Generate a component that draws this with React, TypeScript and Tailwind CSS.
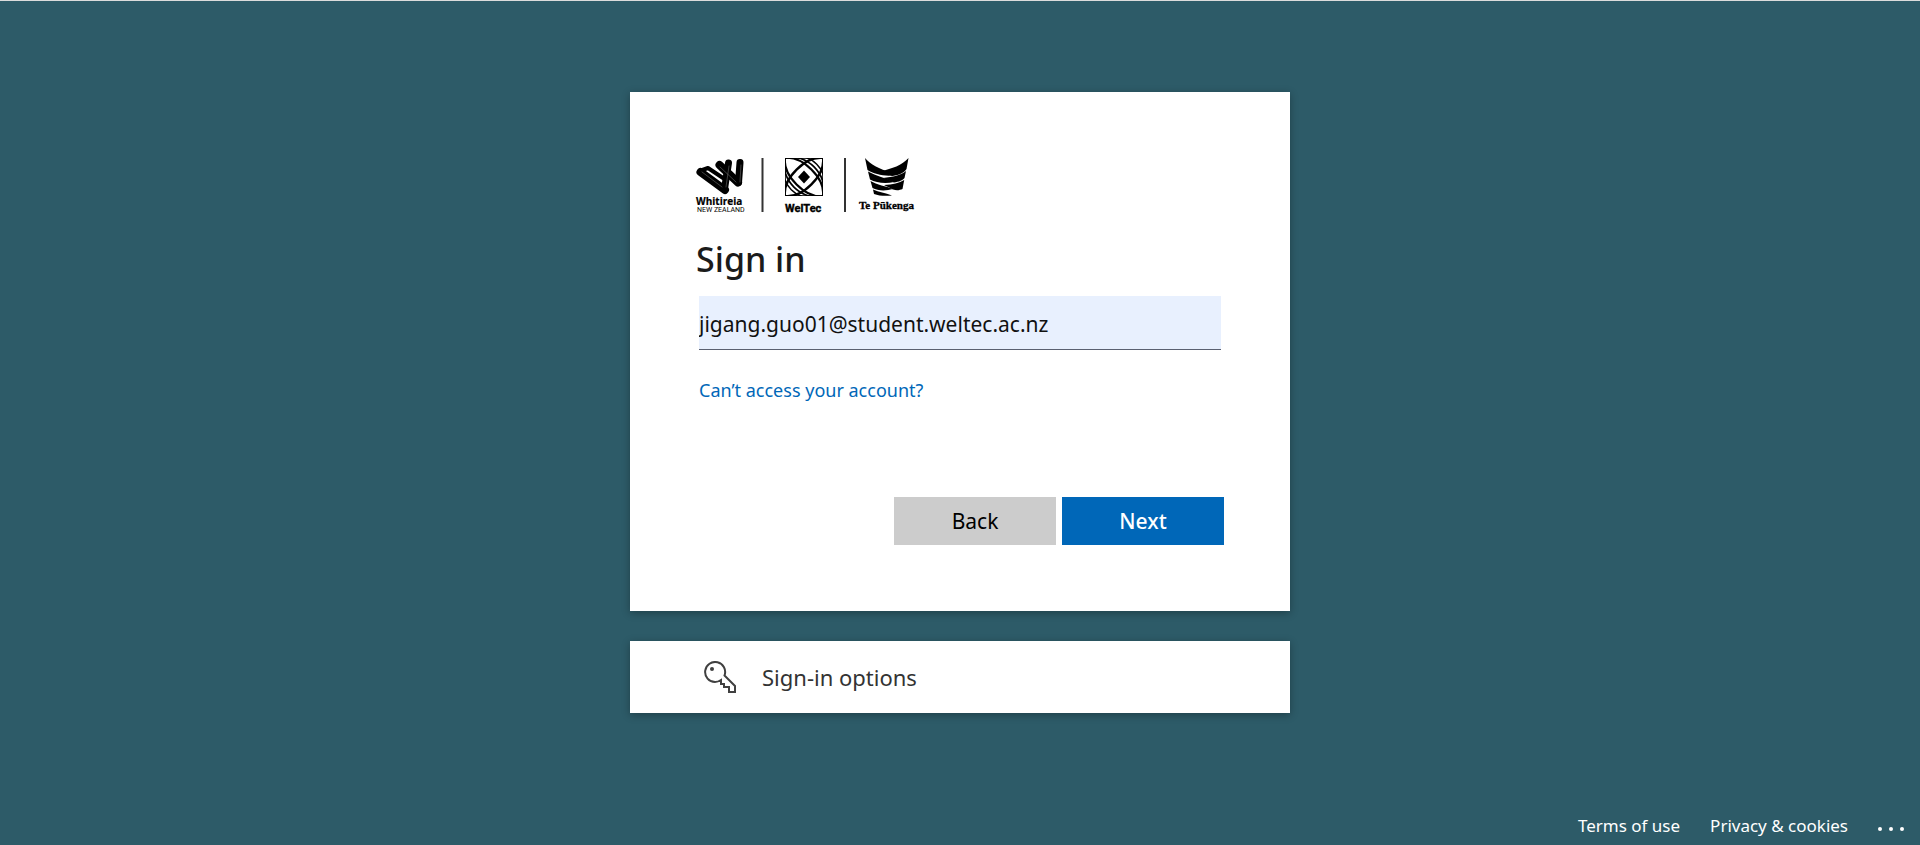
import { useState } from "react";

function PartnerLogo() {
  return (
    <svg viewBox="0 0 220 58" className="h-[58px] w-[220px] overflow-visible" role="img" aria-label="Whitireia, WelTec and Te Pūkenga">
      <g strokeLinejoin="round" strokeLinecap="round">
        <path d="M4.500 14 29 32M23.500 7 42 24.500" stroke="#000" strokeWidth="8" />
        <path d="M28.500 31 32.500 5M42.500 24.500 44 4.500" stroke="#000" strokeWidth="7" />
        <path d="M3.500 13 12 10 27 20" stroke="#000" strokeWidth="4" fill="none" />
        <g stroke="#fff" fill="none" strokeWidth="0.500" opacity="0.5">
          <path d="M6 14 26 29" />
          <path d="M24 9 40 24" />
          <path d="M30 29 33 8" />
          <path d="M44 24 45 7" />
        </g>
        <path d="M37 6 39.500 4 40 12 36.500 9Z" fill="#fff" />
      </g>
      <text x="0" y="47" fontFamily="'Open Sans', sans-serif" fontWeight="700" fontSize="10" stroke="#000" strokeWidth="0.2">Whitireia</text>
      <text x="1" y="54" fontFamily="Roboto, sans-serif" fontSize="7">NEW ZEALAND</text>

      <path d="M66.500 0V54M149 0V54" stroke="#333" strokeWidth="2" />

      <svg x="89" y="0" width="38" height="38" viewBox="0 0 38 38" fill="none" stroke="#000">
        <path d="M.5.500H37.500V37.500H.5Z" strokeWidth="0.8" />
        <path d="M19 12.500 25 19 19 25.500 13 19Z" fill="#000" stroke="none" />
        <g transform="rotate(45 19 19)">
          <path d="M-8 19C3 5 35 5 46 19C35 33 3 33-8 19Z" strokeWidth="2.200" />
          <path d="M-8 19C3 0 35 0 46 19C35 38 3 38-8 19Z" strokeWidth="1.700" />
          <path d="M-8 19C3-5 35-5 46 19C35 43 3 43-8 19Z" strokeWidth="1.400" />
        </g>
        <g transform="rotate(-45 19 19)">
          <path d="M-8 19C3 5 35 5 46 19C35 33 3 33-8 19Z" strokeWidth="2.400" />
        </g>
      </svg>
      <text x="89" y="54" fontFamily="Roboto, sans-serif" fontWeight="700" fontSize="11" stroke="#000" strokeWidth="0.4">WelTec</text>

      <g>
        <path d="M169 0C175 7 184 11 193 14L199 17C190 19 178 16 171.500 12Z" />
        <path d="M212.500 0C206 7 196 11 185 13L196 18C204 17 209 14 210.500 11Z" />
        <path d="M172 13.500C180 18 190 20 198 24C190 26 180 25 174 21.500Z" />
        <path d="M210 13C205 17 197 19 187 20L198 24.500C203 24 207 22 208.500 20Z" />
        <path d="M174.500 23C181 27 190 28 197 31C190 33 182 33 176.500 30Z" />
        <path d="M208.200 22C203 25 197 26.500 188 27L197 31.500C201 33 204 32 206.500 31Z" />
        <path d="M177 31.500C183 34 189 35 196 37.500C190 38 183 38 178 36Z" />
      </g>
      <text x="163" y="51" fontFamily="'Liberation Serif', serif" fontWeight="700" fontSize="11" stroke="#000" strokeWidth="0.3">Te Pūkenga</text>
    </svg>
  );
}

function KeyIcon() {
  return (
    <svg viewBox="0 0 32 32" className="size-8 shrink-0" fill="none" stroke="#404040" strokeWidth="2" aria-hidden="true">
      <path d="M20.500 14.500A10 10 0 1 0 11 21Q14 21 17 19V23H20V26H25V31H31V25Z" />
      <circle cx="8" cy="8" r="2" fill="#404040" stroke="none" />
    </svg>
  );
}

export default function App() {
  const [email, setEmail] = useState("jigang.guo01@student.weltec.ac.nz");

  return (
    <div className="flex min-h-screen flex-col border-t border-[#dcdcdc] bg-[#2d5b68] font-['Noto_Sans','Open_Sans',sans-serif] text-[#1b1b1b]">
      <main className="mx-auto flex w-full max-w-[660px] grow flex-col gap-[30px] pt-[91px]">
        <form onSubmit={(e) => e.preventDefault()} className="bg-white p-[66px] shadow-[0_2px_8px_rgba(0,0,0,0.3)]">
          <PartnerLogo />
          <h1 className="mt-[21px] text-[34px] leading-[44px] font-medium">Sign in</h1>
          <div className="mt-[15px] px-[3px]">
            <input
              type="email"
              aria-label="Email"
              value={email}
              onChange={(e) => setEmail(e.target.value)}
              className="block h-[54px] w-full border-b border-[#5a6070] bg-[#e8f0fe] pt-0.5 text-[21px] text-[#111] outline-none"
            />
            <a href="#" className="mt-7 block text-[18px] leading-6 text-[#0067b8]">
              Can’t access your account?
            </a>
          </div>
          <div className="mt-[95px] flex justify-end gap-1.5">
            <button type="button" className="h-12 w-[162px] bg-[#ccc] pt-0.5 text-[21px] text-black">
              Back
            </button>
            <button type="submit" className="h-12 w-[162px] bg-[#0067b8] pt-0.5 text-[21px] font-medium text-white">
              Next
            </button>
          </div>
        </form>
        <button type="button" className="flex h-[72px] items-center gap-[26px] bg-white px-[74px] text-[22px] text-[#333] shadow-[0_2px_8px_rgba(0,0,0,0.3)]">
          <KeyIcon />
          Sign-in options
        </button>
      </main>
      <footer className="flex h-[38px] items-center justify-end gap-[30px] px-4 text-[17px] text-white">
        <a href="#">Terms of use</a>
        <a href="#">Privacy &amp; cookies</a>
        <button type="button" aria-label="More options" className="flex h-6 items-end gap-[7px] pb-[7px]">
          <span className="size-1 rounded-full bg-white" />
          <span className="size-1 rounded-full bg-white" />
          <span className="size-1 rounded-full bg-white" />
        </button>
      </footer>
    </div>
  );
}
